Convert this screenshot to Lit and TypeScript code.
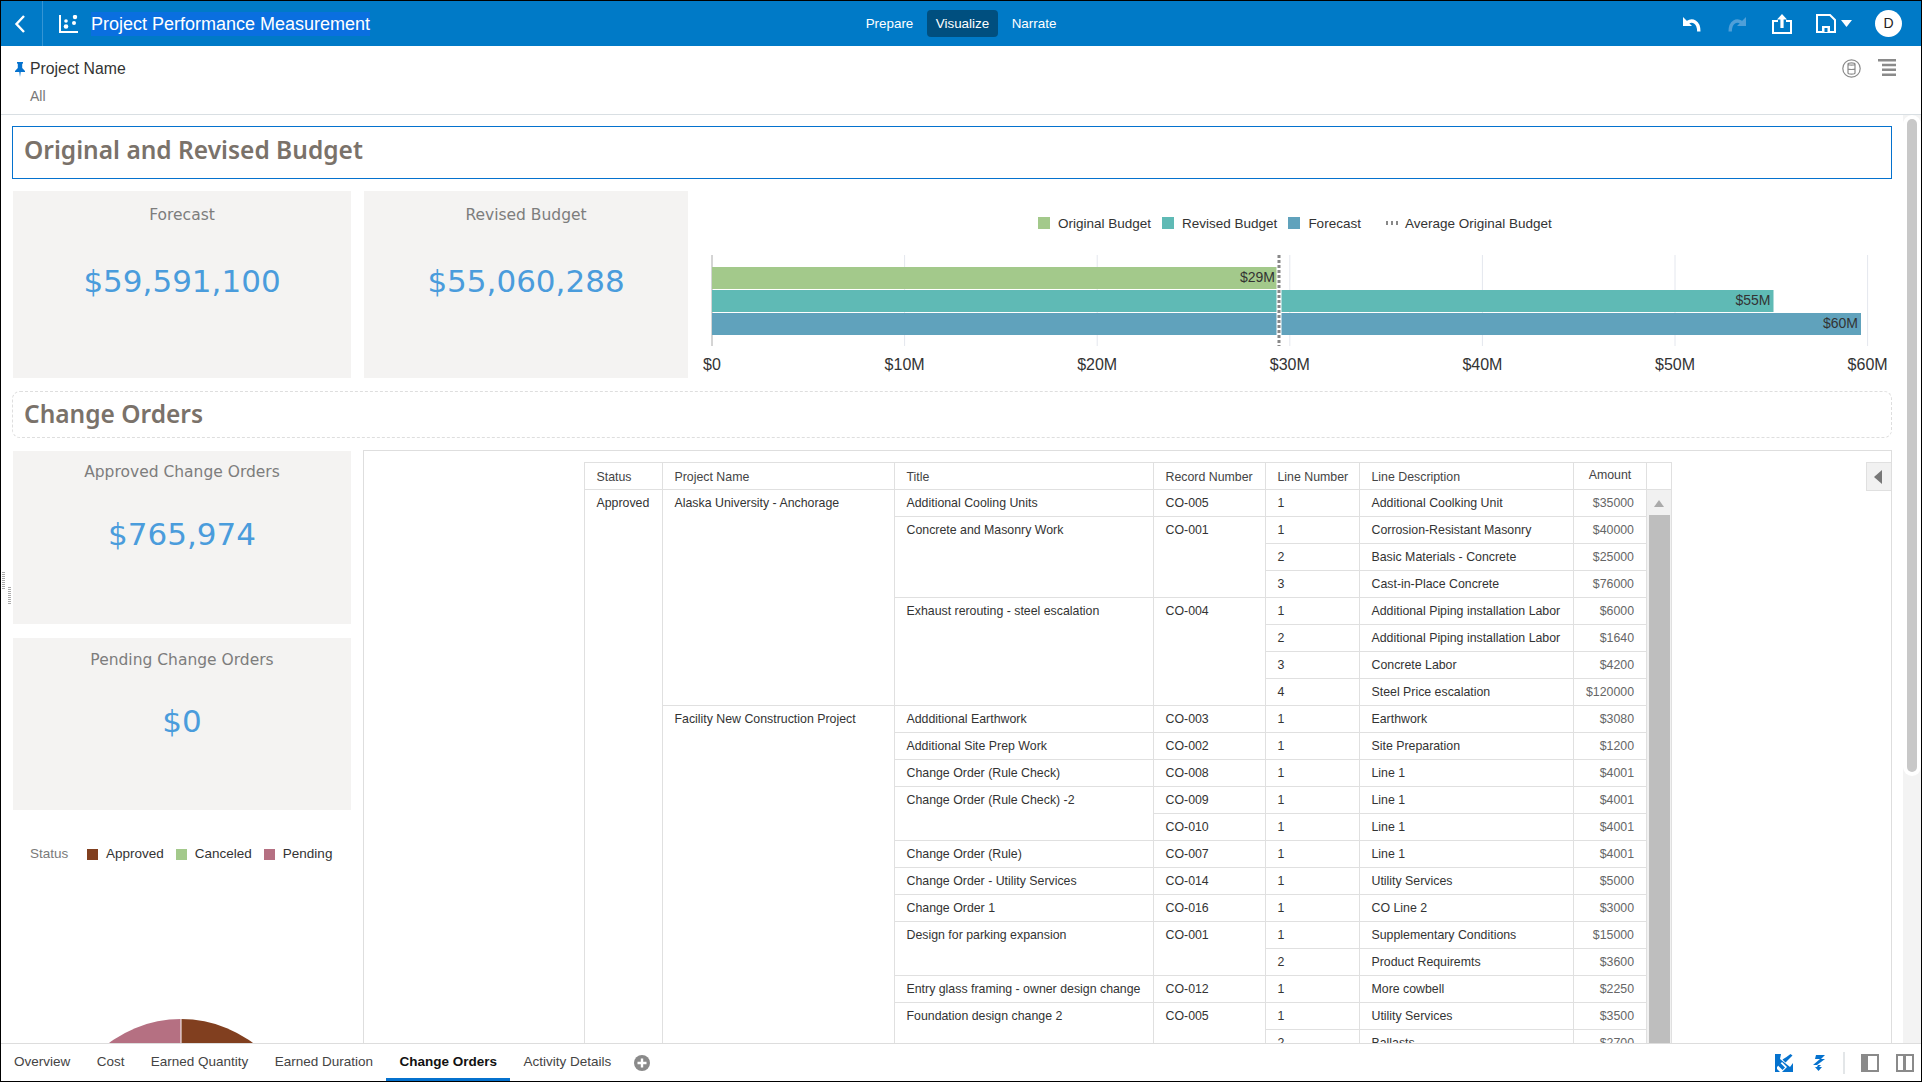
import { LitElement, html, css, svg } from "lit";
import { customElement } from "lit/decorators.js";

type Cell = { t: string; rs?: number };
type Row = {
  status?: Cell; project?: Cell; title?: Cell; record?: Cell;
  line: string; desc: string; amount: string;
};

const rows: Row[] = [
  { status: { t: "Approved", rs: 21 }, project: { t: "Alaska University - Anchorage", rs: 8 }, title: { t: "Additional Cooling Units" }, record: { t: "CO-005" }, line: "1", desc: "Additional Coolking Unit", amount: "$35000" },
  { title: { t: "Concrete and Masonry Work", rs: 3 }, record: { t: "CO-001", rs: 3 }, line: "1", desc: "Corrosion-Resistant Masonry", amount: "$40000" },
  { line: "2", desc: "Basic Materials - Concrete", amount: "$25000" },
  { line: "3", desc: "Cast-in-Place Concrete", amount: "$76000" },
  { title: { t: "Exhaust rerouting - steel escalation", rs: 4 }, record: { t: "CO-004", rs: 4 }, line: "1", desc: "Additional Piping installation Labor", amount: "$6000" },
  { line: "2", desc: "Additional Piping installation Labor", amount: "$1640" },
  { line: "3", desc: "Concrete Labor", amount: "$4200" },
  { line: "4", desc: "Steel Price escalation", amount: "$120000" },
  { project: { t: "Facility New Construction Project", rs: 13 }, title: { t: "Addditional Earthwork" }, record: { t: "CO-003" }, line: "1", desc: "Earthwork", amount: "$3080" },
  { title: { t: "Additional Site Prep Work" }, record: { t: "CO-002" }, line: "1", desc: "Site Preparation", amount: "$1200" },
  { title: { t: "Change Order (Rule Check)" }, record: { t: "CO-008" }, line: "1", desc: "Line 1", amount: "$4001" },
  { title: { t: "Change Order (Rule Check) -2", rs: 2 }, record: { t: "CO-009" }, line: "1", desc: "Line 1", amount: "$4001" },
  { record: { t: "CO-010" }, line: "1", desc: "Line 1", amount: "$4001" },
  { title: { t: "Change Order (Rule)" }, record: { t: "CO-007" }, line: "1", desc: "Line 1", amount: "$4001" },
  { title: { t: "Change Order - Utility Services" }, record: { t: "CO-014" }, line: "1", desc: "Utility Services", amount: "$5000" },
  { title: { t: "Change Order 1" }, record: { t: "CO-016" }, line: "1", desc: "CO Line 2", amount: "$3000" },
  { title: { t: "Design for parking expansion", rs: 2 }, record: { t: "CO-001", rs: 2 }, line: "1", desc: "Supplementary Conditions", amount: "$15000" },
  { line: "2", desc: "Product Requiremts", amount: "$3600" },
  { title: { t: "Entry glass framing - owner design change" }, record: { t: "CO-012" }, line: "1", desc: "More cowbell", amount: "$2250" },
  { title: { t: "Foundation design change 2", rs: 2 }, record: { t: "CO-005", rs: 2 }, line: "1", desc: "Utility Services", amount: "$3500" },
  { line: "2", desc: "Ballasts", amount: "$2700" },
];

const tabs = ["Overview", "Cost", "Earned Quantity", "Earned Duration", "Change Orders", "Activity Details"];

@customElement("app-root")
export class AppRoot extends LitElement {
  static styles = css`
    :host { display: block; width: 1922px; height: 1082px; font-family: "Liberation Sans", Arial, sans-serif; color: #333; }
    * { box-sizing: border-box; }
    .app { width: 100%; height: 100%; border: 1px solid #000; display: flex; flex-direction: column; overflow: hidden; background: #fff; position: relative; }

    .hdr { flex: 0 0 45px; background: #007ac7; color: #fff; display: grid; grid-template-columns: 1fr auto 1fr; align-items: center; }
    .hdr-l { display: flex; align-items: center; height: 100%; }
    .back { width: 42px; height: 100%; border-right: 1px solid #3595d4; display: flex; align-items: center; justify-content: center; padding-right: 3px; }
    .logo { margin-left: 16px; display: block; }
    .app-title { margin-left: 13px; font-size: 18px; line-height: 24px; background: #0a6fe0; white-space: nowrap; }
    .modes { display: flex; align-items: center; gap: 5.5px; font-size: 13.4px; }
    .mode { height: 27px; line-height: 27px; padding: 0 8.5px; border-radius: 4px; }
    .mode.on { background: #004f7f; }
    .hdr-r { display: flex; align-items: center; justify-content: flex-end; height: 100%; padding-right: 19px; }
    .hdr-r svg { display: block; }
    .avatar { width: 27px; height: 27px; border-radius: 50%; background: #fff; color: #222; font-size: 14px; line-height: 27px; text-align: center; margin-left: 23px; }

    .filter { flex: 0 0 69px; border-bottom: 1px solid #d9dfe3; display: flex; justify-content: space-between; padding: 13px 25px 0 14px; }
    .f-name { display: flex; align-items: center; gap: 5px; font-size: 15.8px; line-height: 20px; color: #333; }
    .f-val { margin: 8px 0 0 15px; font-size: 14px; line-height: 18px; color: #777; }
    .f-icons { display: flex; gap: 17px; align-items: flex-start; }

    .main { flex: 1 1 0; min-height: 0; display: flex; overflow: hidden; }
    .content { flex: 1 1 0; min-width: 0; padding: 11px 0 0 11px; overflow: hidden; }
    .vscroll { flex: 0 0 18px; padding: 4px 0 0 4px; background: #f3f3f3; overflow: hidden; }
    .vthumb { width: 10px; height: 653px; border-radius: 5px; background: #c8c8c8; box-shadow: 0 0 0 4px #fff; }

    .sec { height: 53px; width: 1880px; display: flex; align-items: center; padding-left: 11px; font-family: "Noto Sans", sans-serif; font-size: 24.5px; font-weight: 600; color: #7a726a; }
    .sec.sel { border: 1px solid #0572ce; padding-bottom: 7px; }
    .sec.dash { height: 47px; border: 1px dashed #dedede; border-radius: 8px; margin-top: 13px; padding-bottom: 2px; }

    .kpis { display: flex; margin-top: 12px; height: 187px; }
    .card { background: #f4f3f2; text-align: center; font-family: "DejaVu Sans", sans-serif; flex: none; }
    .k1 { width: 338px; margin-left: 1px; }
    .k2 { width: 324px; margin-left: 13px; }
    .card .lbl { font-size: 15.5px; line-height: 20px; color: #7d7d7d; padding-top: 14px; }
    .card .val { font-size: 31px; line-height: 40px; color: #4a9cdc; margin-top: 36px; }

    .chart { flex: 1 1 0; min-width: 0; }
    .legend { display: flex; align-items: center; font-size: 13.5px; color: #333; height: 16px; margin: 24px 0 0 350px; }
    .sw { width: 12px; height: 12px; margin-right: 8px; flex: none; }
    .li { margin-right: 11px; display: flex; align-items: center; white-space: nowrap; }
    .plot { display: block; margin-top: 11px; }
    .plot text { font-family: "Liberation Sans", Arial, sans-serif; fill: #333; }

    .lower { display: flex; margin-top: 13px; }
    .left { width: 339px; margin-left: 1px; flex: none; }
    .a1 { height: 173px; width: 338px; }
    .a2 { height: 172px; width: 338px; margin-top: 14px; }
    .a1 .lbl { padding-top: 11px; }
    .a2 .lbl { padding-top: 12px; }
    .a1 .val { margin-top: 32px; }
    .a2 .val { margin-top: 31px; }
    .st { display: flex; align-items: center; margin: 35px 0 0 17px; font-size: 13.5px; line-height: 18px; color: #333; white-space: nowrap; height: 18px; }
    .st .h { color: #7a7a7a; width: 57px; flex: none; }
    .st .sw { width: 11px; height: 11px; margin-right: 8px; }
    .st .e { display: flex; align-items: center; margin-right: 12px; flex: none; }
    .pie { display: block; margin-top: 156px; }

    .panel { width: 1529px; margin: -1px 0 0 11px; height: 700px; border: 1px solid #dedede; position: relative; padding: 11px 0 0 220px; flex: none; }
    table { border-collapse: collapse; table-layout: fixed; width: 1087px; font-size: 12.35px; color: #333; }
    th, td { border: 1px solid #e0e0e0; height: 27px; padding: 0 0 0 11.5px; text-align: left; font-weight: 400; vertical-align: top; line-height: 26px; white-space: nowrap; overflow: hidden; }
    th { color: #444; padding-top: 2px; line-height: 24px; }
    td.a { text-align: right; padding: 0 12px 0 0; color: #666; }
    th.a { color: #444; text-align: center; padding: 0; line-height: 25px; }
    th.sb { padding: 0; }
    td.sb { padding: 0; border: 0; background: #f1f1f1; border-right: 1px solid #e0e0e0; }
    .sbwrap { display: flex; flex-direction: column; align-items: center; }
    .arrowup { width: 0; height: 0; border: solid transparent; border-width: 0 5.5px 7px; border-bottom-color: #aaa; margin-top: 10px; }
    .sbthumb { width: 21px; height: 540px; margin-top: 8px; background: #bebebe; }
    .collapse { position: absolute; right: 0; top: 11px; width: 25px; height: 29px; padding-right: 3px; background: #f1f1f1; border: 1px solid #e0e0e0; border-right: 0; display: flex; align-items: center; justify-content: center; }
    .collapse i { display: block; width: 0; height: 0; border: solid transparent; border-width: 7px 8px 7px 0; border-right-color: #777; }

    .grip { position: absolute; width: 3px; height: 18px; background: repeating-linear-gradient(#aaa 0 1px, transparent 1px 2px); }
    .g1 { left: 1px; top: 571px; }
    .g2 { left: 7px; top: 586px; }

    .tabs { flex: 0 0 38px; border-top: 1px solid #ddd; display: flex; align-items: stretch; font-size: 13.5px; color: #444; }
    .tab { padding: 1px 13px 0; margin-right: 0.4px; display: flex; align-items: center; white-space: nowrap; border-bottom: 3px solid transparent; }
    .tab.on { font-weight: 700; color: #111; border-bottom-color: #0572ce; }
    .plus { display: block; align-self: center; margin-left: 9px; }
    .tabs-r { margin-left: auto; display: flex; align-items: center; padding-right: 7px; }
    .tabs-r svg { display: block; }
    .div { width: 2px; height: 22px; background: #e3e6e8; margin: 0 16px 0 18px; }
  `;

  private plot() {
    const x0 = 24, per = 192.6;
    const ticks = [0, 1, 2, 3, 4, 5, 6];
    const bar = (y: number, w: number, c: string, label: string) => svg`
      <rect x=${x0} y=${y} width=${w} height=${22} fill=${c}></rect>
      <text x=${x0 + w - 3} y=${y + 15} font-size="14" text-anchor="end">${label}</text>`;
    return html`<svg class="plot" width="1203" height="136" viewBox="0 0 1203 136">
      ${ticks.map((t) => svg`<line x1=${x0 + t * per} x2=${x0 + t * per} y1="13" y2="104" stroke=${t === 0 ? "#aaa" : "#e4e7ee"} stroke-width="1"></line>`)}
      ${bar(25, 566, "#a3c98b", "$29M")}
      ${bar(48, 1061.5, "#5fbab5", "$55M")}
      ${bar(71, 1149, "#60a2bc", "$60M")}
      <line x1="591" x2="591" y1="13" y2="104" stroke="#fff" stroke-width="5"></line>
      <line x1="591" x2="591" y1="13" y2="104" stroke="#888" stroke-width="3" stroke-dasharray="3 2"></line>
      ${ticks.map((t) => svg`<text x=${x0 + t * per} y="128" font-size="16" text-anchor="middle">${t === 0 ? "$0" : `$${t}0M`}</text>`)}
    </svg>`;
  }

  private cell(c: Cell | undefined) {
    return c ? html`<td rowspan=${c.rs ?? 1}>${c.t}</td>` : null;
  }

  render() {
    return html`<div class="app">
      <div class="hdr">
        <div class="hdr-l">
          <div class="back"><svg width="12" height="20" viewBox="0 0 12 20"><path d="M10 2 2.5 10l7.500 8" fill="none" stroke="#fff" stroke-width="2.4"/></svg></div>
          <svg class="logo" width="19" height="18" viewBox="0 0 19 18" fill="#fff"><path d="M0 0h2v16h17v2H0z"/><circle cx="16" cy="2" r="2.2"/><circle cx="7" cy="6" r="1.8"/><circle cx="15" cy="8" r="2"/><circle cx="7" cy="11.500" r="2.300"/></svg>
          <span class="app-title">Project Performance Measurement</span>
        </div>
        <div class="modes">
          <span class="mode">Prepare</span><span class="mode on">Visualize</span><span class="mode">Narrate</span>
        </div>
        <div class="hdr-r">
          <svg width="18" height="16" viewBox="0 0 18 16"><path d="M0 1v9h9z" fill="#fff"/><path d="M4.500 6.500C9 3.500 15.800 5 15.800 15.500" fill="none" stroke="#fff" stroke-width="3.400"/></svg>
          <svg style="margin-left:27px" width="18" height="16" viewBox="0 0 18 16"><path d="M18 1v9H9z" fill="#4f9fd8"/><path d="M13.500 6.500C9 3.500 2.200 5 2.200 15.500" fill="none" stroke="#4f9fd8" stroke-width="3.400"/></svg>
          <svg style="margin-left:26px" width="20" height="20" viewBox="0 0 20 20"><path d="M6 7H1v12h18V7h-5" fill="none" stroke="#fff" stroke-width="2"/><path d="M10 0l5 5.500h-3.400V14H8.400V5.500H5z" fill="#fff"/></svg>
          <svg style="margin-left:24px" width="20" height="19" viewBox="0 0 20 19"><path d="M1 1h13l5 5v12H1z" fill="none" stroke="#fff" stroke-width="2"/><path d="M6 12h8v6H6z" fill="#fff"/><path d="M8.500 14h3v4h-3z" fill="#007ac7"/></svg>
          <svg style="margin-left:5px" width="11" height="7" viewBox="0 0 11 7"><path d="M0 0h11L5.500 7z" fill="#fff"/></svg>
          <div class="avatar">D</div>
        </div>
      </div>

      <div class="filter">
        <div>
          <div class="f-name"><svg width="10" height="15" viewBox="0 0 10 15" fill="#0572ce"><path d="M2 0h6v1.200L7.200 2v4L10 9v1H5.700L5 15l-.7-5H0V9l2.800-3V2L2 1.200z"/></svg>Project Name</div>
          <div class="f-val">All</div>
        </div>
        <div class="f-icons">
          <svg width="19" height="19" viewBox="0 0 19 19" fill="none" stroke="#8a8a8a"><circle cx="9.500" cy="9.500" r="8.700" stroke-width="1.200"/><path d="M6 5c0-1.500 7-1.500 7 0v9c0 1.500-7 1.500-7 0zM6 5c0 1.500 7 1.500 7 0M6 9.500c0 1.300 7 1.300 7 0" stroke-width="1.200"/></svg>
          <svg width="18" height="17" viewBox="0 0 18 17" fill="#8a8a8a"><path d="M0 0h18v2.500H0zM4 4.800h14v2.500H4zM4 9.600h14v2.500H4zM4 14.400h14v2.500H4z"/></svg>
        </div>
      </div>

      <div class="main">
        <div class="grip g1"></div><div class="grip g2"></div>
        <div class="content">
          <div class="sec sel">Original and Revised Budget</div>
          <div class="kpis">
            <div class="card k1"><div class="lbl">Forecast</div><div class="val">$59,591,100</div></div>
            <div class="card k2"><div class="lbl">Revised Budget</div><div class="val">$55,060,288</div></div>
            <div class="chart">
              <div class="legend">
                <span class="li"><span class="sw" style="background:#a3c98b"></span>Original Budget</span>
                <span class="li"><span class="sw" style="background:#5fbab5"></span>Revised Budget</span>
                <span class="li" style="margin-right:25px"><span class="sw" style="background:#60a2bc"></span>Forecast</span>
                <span class="li"><svg width="12" height="4" viewBox="0 0 12 4" style="margin-right:7px"><path d="M0 0h2v4H0zM5 0h2v4H5zM10 0h2v4h-2z" fill="#888"/></svg>Average Original Budget</span>
              </div>
              ${this.plot()}
            </div>
          </div>
          <div class="sec dash">Change Orders</div>
          <div class="lower">
            <div class="left">
              <div class="card a1"><div class="lbl">Approved Change Orders</div><div class="val">$765,974</div></div>
              <div class="card a2"><div class="lbl">Pending Change Orders</div><div class="val">$0</div></div>
              <div class="st">
                <span class="h">Status</span>
                <span class="e"><span class="sw" style="background:#813f1f"></span>Approved</span>
                <span class="e"><span class="sw" style="background:#a3c98b"></span>Canceled</span>
                <span class="e"><span class="sw" style="background:#b57082"></span>Pending</span>
              </div>
              <svg class="pie" width="337" height="130" viewBox="0 0 337 130">
                <path d="M168 120 L168 0 A120 120 0 0 0 48 120 Z" fill="#b57082"></path>
                <path d="M168 120 L168 0 A120 120 0 0 1 288 120 Z" fill="#813f1f"></path>
                <line x1="168" x2="168" y1="0" y2="120" stroke="#fff"></line>
              </svg>
            </div>
            <div class="panel">
              <table>
                <colgroup><col style="width:78px"><col style="width:232px"><col style="width:259px"><col style="width:112px"><col style="width:94px"><col style="width:214px"><col style="width:73px"><col style="width:25px"></colgroup>
                <thead><tr><th>Status</th><th>Project Name</th><th>Title</th><th>Record Number</th><th>Line Number</th><th>Line Description</th><th class="a">Amount</th><th class="sb"></th></tr></thead>
                <tbody>
                  ${rows.map((r, i) => html`<tr>
                    ${this.cell(r.status)}${this.cell(r.project)}${this.cell(r.title)}${this.cell(r.record)}
                    <td>${r.line}</td><td>${r.desc}</td><td class="a">${r.amount}</td>
                    ${i === 0 ? html`<td class="sb" rowspan="21"><div class="sbwrap"><div class="arrowup"></div><div class="sbthumb"></div></div></td>` : null}
                  </tr>`)}
                </tbody>
              </table>
              <div class="collapse"><i></i></div>
            </div>
          </div>
        </div>
        <div class="vscroll"><div class="vthumb"></div></div>
      </div>

      <div class="tabs">
        ${tabs.map((t) => html`<div class="tab ${t === "Change Orders" ? "on" : ""}">${t}</div>`)}
        <svg class="plus" width="16" height="16" viewBox="0 0 16 16"><circle cx="8" cy="8" r="8" fill="#8a8a8a"/><path d="M3.500 8h9M8 3.500v9" stroke="#fff" stroke-width="2.400"/></svg>
        <div class="tabs-r">
          <svg width="18" height="18" viewBox="0 0 18 18"><rect width="18" height="18" fill="#0572ce"/><path d="M6 0h12v9l-3 4L5 5z" fill="#fff"/><path d="M2 13l5-5 5 5-2 2-3 3H5L2 15z" fill="#fff"/><path d="M7.500 5.500l3 3 3-3 4-4-2-1.500-4 3z" fill="#0572ce"/><path d="M5.500 9l4.500 4.500-2.500 2.500L3 11.500z" fill="#0572ce"/></svg>
          <svg style="margin-left:20px" width="12" height="16" viewBox="0 0 12 16" fill="#0572ce"><path d="M3 0h9L8 4h4L4 10h4L6 12h3l-3.500 4L2 12h2l1-2H0l7-6H2z"/></svg>
          <div class="div"></div>
          <svg width="18" height="18" viewBox="0 0 18 18"><path d="M0 0h18v18H0z" fill="#8a8a8a"/><path d="M7 2h9v14H7z" fill="#fff"/></svg>
          <svg style="margin-left:17px" width="18" height="18" viewBox="0 0 18 18"><path d="M0 0h18v18H0z" fill="#8a8a8a"/><path d="M2 2h5v14H2zM10 2h6v14h-6z" fill="#fff"/></svg>
        </div>
      </div>
    </div>`;
  }
}
